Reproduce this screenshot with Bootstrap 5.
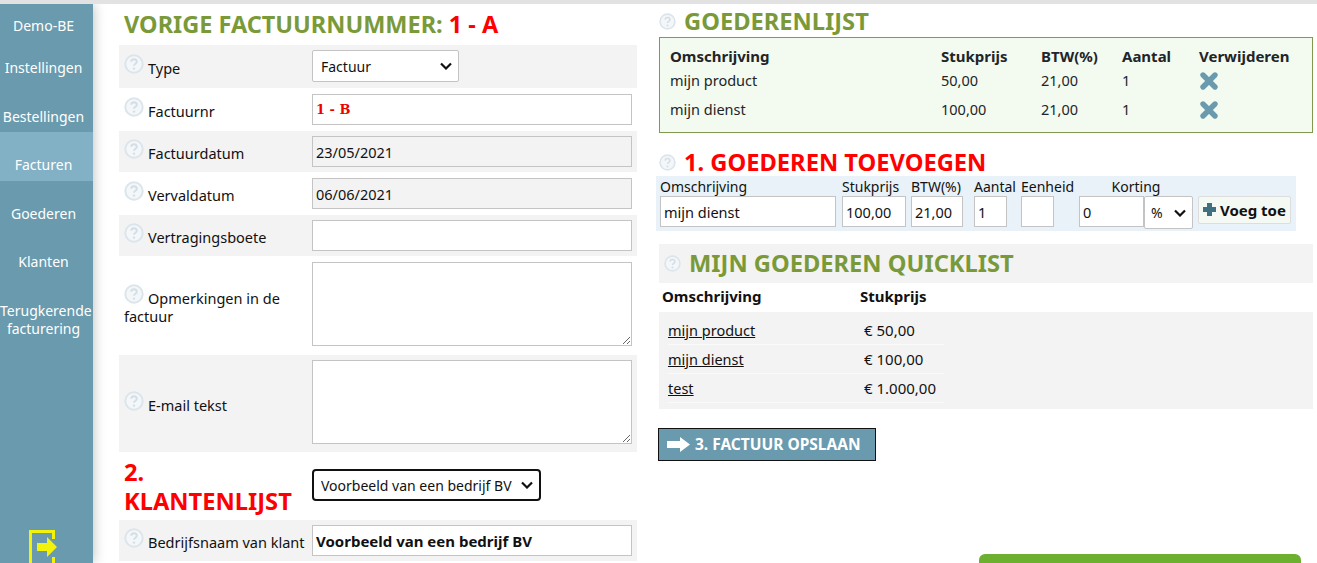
<!DOCTYPE html>
<html lang="nl">
<head>
    <meta charset="UTF-8">
    <title>Factuur</title>
    <link href="https://cdn.jsdelivr.net/npm/bootstrap@5.3.0/dist/css/bootstrap.min.css" rel="stylesheet">
    <style>
        html, body { height: 563px; overflow: hidden; }
        body { font-family: "Noto Sans", "DejaVu Sans", sans-serif; font-size: 14.5px; color: #111; border-top: 4px solid #e2e2e2; background: #fff; }
        .shell { height: 559px; overflow: hidden; }
        .side { width: 93px; flex: none; background: #6a9aad; box-shadow: 0 0 12px rgba(0,0,0,.28); font-size: 14px; color: #fff; text-align: center; }
        .side a { display: block; flex: none; color: #fff; text-decoration: none; line-height: 18px; padding-right: 6px; }
        .side-top { height: 31px; padding-top: 13px; }
        .side-item { height: 48.5px; padding-top: 24px; }
        .side-item.now { background: #82b0c4; }
        .side-exit { margin-top: 204px; }
        .left { width: 518px; flex: none; margin-left: 26px; }
        .right { width: 654px; flex: none; margin-left: 22px; }
        .title { font-size: 23.7px; font-weight: 700; line-height: 26px; margin: 0; color: #7a9a3a; }
        .red { color: #f00; }
        .h-main { padding: 7px 0 8px 5px; height: 41px; }
        .h-main .title { font-size: 23.5px; }
        .frow { display: flex; align-items: center; padding: 5px; }
        .frow.grey { background: #f3f3f3; }
        .frow.tall { padding-top: 6px; padding-bottom: 6px; }
        .frow.first { padding-bottom: 6px; }
        .frow.area { padding-bottom: 8px; }
        .frow.area-b { padding-top: 6px; padding-bottom: 9px; }
        .flabel { width: 188px; flex: none; line-height: 18px; padding-bottom: 2px; }
        .frow.area .flabel, .frow.area-b .flabel { padding-bottom: 0; }
        .hint { width: 20px; height: 20px; vertical-align: 0; margin-right: 4px; }
        .hint-sm { width: 17px; height: 17px; flex: none; }
        .field { width: 320px; height: 31px; flex: none; border: 1px solid #c4c4c4; border-radius: 0; padding: 2px 3px; font-size: 14.5px; color: #111; box-shadow: none; }
        .field.ro { background: #f3f3f3; }
        textarea.field { height: 84px; display: block; }
        .bold-red { font-weight: 700; color: #e00; font-family: "DejaVu Serif", serif; font-size: 13px; }
        .bold-black { font-weight: 700; font-size: 15px; }
        select.pick { width: 147px; height: 32px; border: 1px solid #c4c4c4; border-radius: 2px; font-size: 14px; padding: 2px 8px; color: #111;
            background-image: url("data:image/svg+xml,%3csvg xmlns='http://www.w3.org/2000/svg' viewBox='0 0 12 8'%3e%3cpath d='M1 1.5l5 5 5-5' fill='none' stroke='%23111' stroke-width='2.2'/%3e%3c/svg%3e");
            background-size: 12px 8px; background-position: right 6px center; }
        select.pick.strong { width: 229px; border: 2px solid #111; border-radius: 4px; padding-left: 7px; }
        .klant { padding: 3px 5px; height: 68px; align-items: flex-start; }
        .klant .title { width: 188px; line-height: 29px; padding-top: 3px; }
        .klant select { margin-top: 14px; }
        .goods { border: 1px solid #7f9a4f; background: #f3faf0; height: 96px; padding: 8px 10px; margin-top: 3px; }
        .goods-table { margin: 0; --bs-table-bg: transparent; font-size: 14.5px; width: 100%; table-layout: fixed; }
        .goods-table td, .goods-table th { border: 0; padding: 0; height: 29px; vertical-align: middle; }
        .goods-table th { height: 20px; line-height: 18px; font-size: 15px; }
        .x-mark { width: 20px; height: 20px; display: block; }
        .add-head { margin-top: 16px; margin-bottom: 1px; }
        .add-strip { background: #e8f2f8; height: 55px; width: 640px; margin-left: -3px; padding: 1px 4px; }
        .add-col { flex: none; }
        .add-col label { display: block; line-height: 18px; height: 19px; padding-top: 1px; font-size: 14px; white-space: nowrap; }
        .add-col .field { width: 100%; height: 31px; padding: 2px 3px; }
        .btn-add { height: 28px; width: 93px; padding: 0; margin: 0; border: 1px solid #ddd; border-radius: 2px; background: #f4f9f4; font-weight: 700; font-size: 15px; color: #111; white-space: nowrap; }
        .quick { background: #f3f3f3; height: 39px; padding: 6px 5px; margin-top: 13px; }
        .quick-head { height: 29px; padding: 2px 3px 0; font-weight: 700; font-size: 15px; }
        .quick-body { background: #f3f3f3; height: 97px; padding: 4px 9px; }
        .qrow { width: 276px; height: 29px; line-height: 28px; border-bottom: 1px solid #fafafa; }
        .qrow a { color: #111; width: 196px; display: block; }
        .qrow span { font-size: 15px; }
        .btn-save { display: flex; align-items: center; gap: 5px; width: 218px; height: 33px; margin: 19px 0 0 -1px; padding: 0 8px; background: #6a9aad; border: 1px solid #111; border-radius: 0; color: #fff; font-weight: 700; font-size: 15.5px; white-space: nowrap; }
        .green-bar { width: 322px; height: 40px; margin: 93px 0 0 320px; background: #6db02f; border-radius: 6px 6px 0 0; }
    </style>
</head>
<body>
<svg width="0" height="0" class="position-absolute">
    <symbol id="help" viewBox="0 0 20 20">
        <circle cx="10" cy="10" r="8.7" fill="#f4f7f9" stroke="#dce5eb" stroke-width="2"/>
        <path d="M7.2 7.8c.2-3.4 5.6-3.4 5.6 0 0 2-2.8 2-2.8 4" fill="none" stroke="#d3dee5" stroke-width="1.9"/>
        <circle cx="10" cy="14.6" r="1.2" fill="#d3dee5"/>
    </symbol>
    <symbol id="cross" viewBox="0 0 20 20">
        <path d="M4 4l12 12M16 4L4 16" fill="none" stroke="#6a9aad" stroke-width="5.4" stroke-linecap="round"/>
    </symbol>
</svg>
<div class="shell d-flex">
    <nav class="side d-flex flex-column">
        <a class="side-top" href="#">Demo-BE</a>
        <a class="side-item" href="#">Instellingen</a>
        <a class="side-item" href="#">Bestellingen</a>
        <a class="side-item now" href="#">Facturen</a>
        <a class="side-item" href="#">Goederen</a>
        <a class="side-item" href="#">Klanten</a>
        <a class="side-item" href="#">Terugkerende facturering</a>
        <a class="side-exit" href="#">
            <svg width="30" height="36" viewBox="0 0 30 36">
                <path d="M24.5 9V1.5h-23v33h23V27" fill="none" stroke="#f2f20a" stroke-width="3"/>
                <path d="M8 13h10V7l10 10-10 10v-6H8z" fill="#f2f20a"/>
            </svg>
        </a>
    </nav>

    <div class="left">
        <div class="h-main"><h1 class="title">VORIGE FACTUURNUMMER: <span class="red">1 - A</span></h1></div>
        <div class="frow grey first"><div class="flabel"><svg class="hint"><use href="#help"/></svg>Type</div>
            <select class="form-select pick"><option>Factuur</option></select></div>
        <div class="frow tall"><div class="flabel"><svg class="hint"><use href="#help"/></svg>Factuurnr</div>
            <input class="form-control field bold-red" value="1 - B"></div>
        <div class="frow grey"><div class="flabel"><svg class="hint"><use href="#help"/></svg>Factuurdatum</div>
            <input class="form-control field ro" value="23/05/2021" readonly></div>
        <div class="frow tall"><div class="flabel"><svg class="hint"><use href="#help"/></svg>Vervaldatum</div>
            <input class="form-control field ro" value="06/06/2021" readonly></div>
        <div class="frow grey"><div class="flabel"><svg class="hint"><use href="#help"/></svg>Vertragingsboete</div>
            <input class="form-control field"></div>
        <div class="frow area-b"><div class="flabel"><svg class="hint"><use href="#help"/></svg>Opmerkingen in de factuur</div>
            <textarea class="form-control field"></textarea></div>
        <div class="frow grey area"><div class="flabel"><svg class="hint"><use href="#help"/></svg>E-mail tekst</div>
            <textarea class="form-control field"></textarea></div>
        <div class="frow klant"><h2 class="title red">2.<br>KLANTENLIJST</h2>
            <select class="form-select pick strong"><option>Voorbeeld van een bedrijf BV</option></select></div>
        <div class="frow grey"><div class="flabel"><svg class="hint"><use href="#help"/></svg>Bedrijfsnaam van klant</div>
            <input class="form-control field bold-black" value="Voorbeeld van een bedrijf BV"></div>
    </div>

    <div class="right">
        <h2 class="title mt-1 d-flex align-items-center gap-2"><svg class="hint-sm ms-0"><use href="#help"/></svg>GOEDERENLIJST</h2>
        <div class="goods">
            <table class="table goods-table">
                <colgroup><col style="width:271px"><col style="width:100px"><col style="width:81px"><col style="width:77px"><col></colgroup>
                <tr><th>Omschrijving</th><th>Stukprijs</th><th>BTW(%)</th><th>Aantal</th><th>Verwijderen</th></tr>
                <tr><td>mijn product</td><td>50,00</td><td>21,00</td><td>1</td><td><svg class="x-mark"><use href="#cross"/></svg></td></tr>
                <tr><td>mijn dienst</td><td>100,00</td><td>21,00</td><td>1</td><td><svg class="x-mark"><use href="#cross"/></svg></td></tr>
            </table>
        </div>

        <h2 class="title red d-flex align-items-center gap-2 add-head"><svg class="hint-sm"><use href="#help"/></svg>1. GOEDEREN TOEVOEGEN</h2>
        <div class="add-strip d-flex align-items-start">
            <div class="add-col me-1" style="width:176px"><label>Omschrijving</label><input class="form-control field" value="mijn dienst"></div>
            <div class="add-col" style="width:64px;margin-left:2px"><label>Stukprijs</label><input class="form-control field" value="100,00"></div>
            <div class="add-col" style="width:52px;margin-left:5px"><label>BTW(%)</label><input class="form-control field" value="21,00"></div>
            <div class="add-col" style="width:33px;margin-left:11px"><label>Aantal</label><input class="form-control field" value="1"></div>
            <div class="add-col" style="width:33px;margin-left:14px"><label>Eenheid</label><input class="form-control field"></div>
            <div class="add-col" style="width:114px;margin-left:25px">
                <label class="text-center">Korting</label>
                <div class="d-flex"><input class="form-control field" style="width:65px" value="0">
                <select class="form-select pick" style="width:49px;height:33px;padding:2px 6px"><option>%</option></select></div>
            </div>
            <div class="add-col" style="margin-left:5px;padding-top:19px"><button class="btn btn-add" type="button">
                <svg width="13" height="13" viewBox="0 0 13 13" class="align-baseline"><path d="M4 0h5v4h4v5H9v4H4V9H0V4h4z" fill="#3f6f80"/></svg> Voeg toe</button></div>
        </div>

        <div class="quick">
            <h2 class="title d-flex align-items-center gap-2"><svg class="hint-sm"><use href="#help"/></svg>MIJN GOEDEREN QUICKLIST</h2>
        </div>
        <div class="quick-head d-flex"><div style="width:198px">Omschrijving</div><div>Stukprijs</div></div>
        <div class="quick-body">
            <div class="qrow d-flex"><a href="#">mijn product</a><span>€ 50,00</span></div>
            <div class="qrow d-flex"><a href="#">mijn dienst</a><span>€ 100,00</span></div>
            <div class="qrow d-flex"><a href="#">test</a><span>€ 1.000,00</span></div>
        </div>
        <button class="btn btn-save" type="button">
            <svg width="23" height="15" viewBox="0 0 23 15"><path d="M0 4h13V0l10 7.5L13 15v-4H0z" fill="#fff"/></svg>
            3. FACTUUR OPSLAAN</button>
        <div class="green-bar"></div>
    </div>
</div>
<script src="https://cdn.jsdelivr.net/npm/bootstrap@5.3.0/dist/js/bootstrap.bundle.min.js"></script>
</body>
</html>
